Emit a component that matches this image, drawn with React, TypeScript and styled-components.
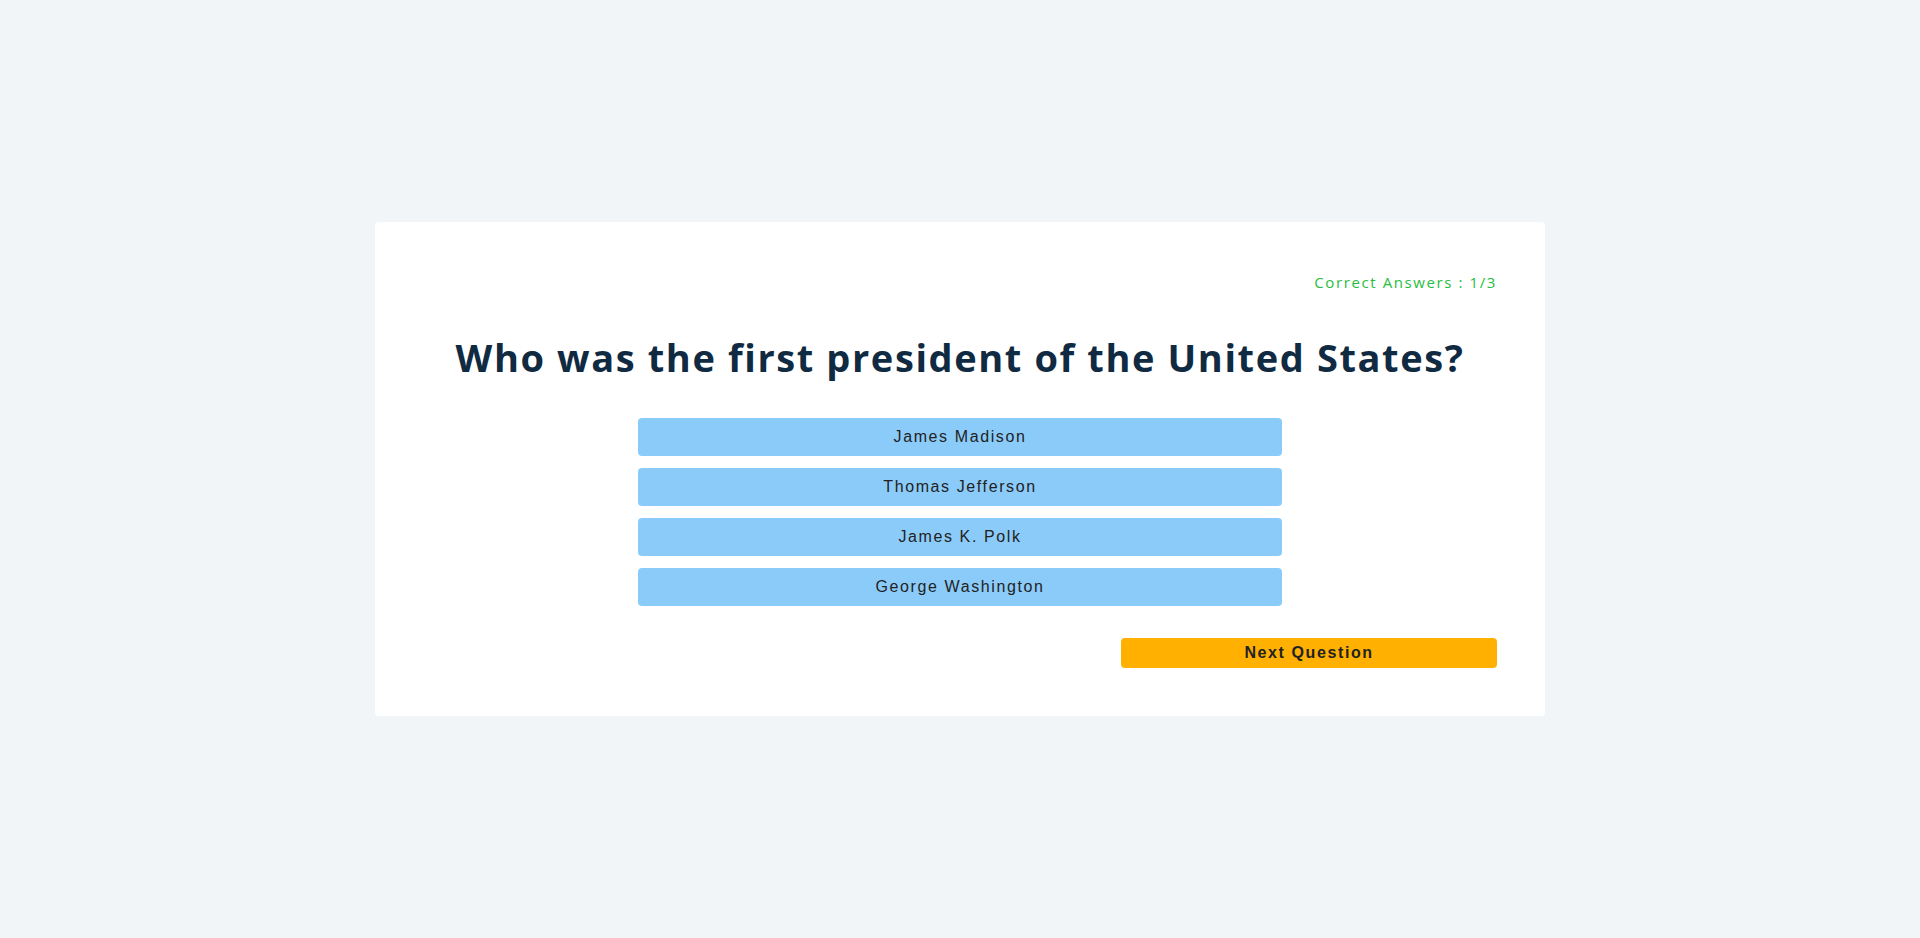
import React from 'react';
import styled, { createGlobalStyle } from 'styled-components';

const GlobalStyle = createGlobalStyle`
  *, *::before, *::after { box-sizing: border-box; margin: 0; padding: 0; }
  body {
    background: #f1f5f8;
    color: #102a42;
    font-family: "Open Sans", "Noto Sans", sans-serif;
  }
`;

const Page = styled.main`
  min-height: 100vh;
  display: grid;
  place-items: center;
`;

const Quiz = styled.section`
  width: 90vw;
  max-width: 1170px;
  padding: 48px;
  background: #fff;
  border-radius: 4px;
`;

const Score = styled.p`
  color: #28bd40;
  font-size: 15px;
  line-height: 24px;
  letter-spacing: 0.1rem;
  text-align: right;
`;

const Question = styled.h2`
  margin-top: 34px;
  font-size: 38px;
  font-weight: 700;
  line-height: 58px;
  letter-spacing: 0.1rem;
  text-align: center;
`;

const Answers = styled.div`
  width: 60%;
  margin: 32px auto;
  display: grid;
  gap: 12px;
`;

const Button = styled.button`
  border: 0;
  border-radius: 4px;
  color: #222;
  font-family: "Liberation Sans", Arial, sans-serif;
  font-size: 16px;
  letter-spacing: 0.1rem;
  cursor: pointer;
`;

const AnswerButton = styled(Button)`
  height: 38px;
  background: #8bcbf9;
`;

const NextButton = styled(Button)`
  display: block;
  width: 35%;
  height: 30px;
  margin-left: auto;
  background: #ffb000;
  font-weight: 700;
`;

const answers = ['James Madison', 'Thomas Jefferson', 'James K. Polk', 'George Washington'];

export default function App() {
  return (
    <>
      <GlobalStyle />
      <Page>
        <Quiz>
          <Score>Correct Answers : 1/3</Score>
          <Question>Who was the first president of the United States?</Question>
          <Answers>
            {answers.map((answer) => (
              <AnswerButton key={answer} type="button">{answer}</AnswerButton>
            ))}
          </Answers>
          <NextButton type="button">Next Question</NextButton>
        </Quiz>
      </Page>
    </>
  );
}
